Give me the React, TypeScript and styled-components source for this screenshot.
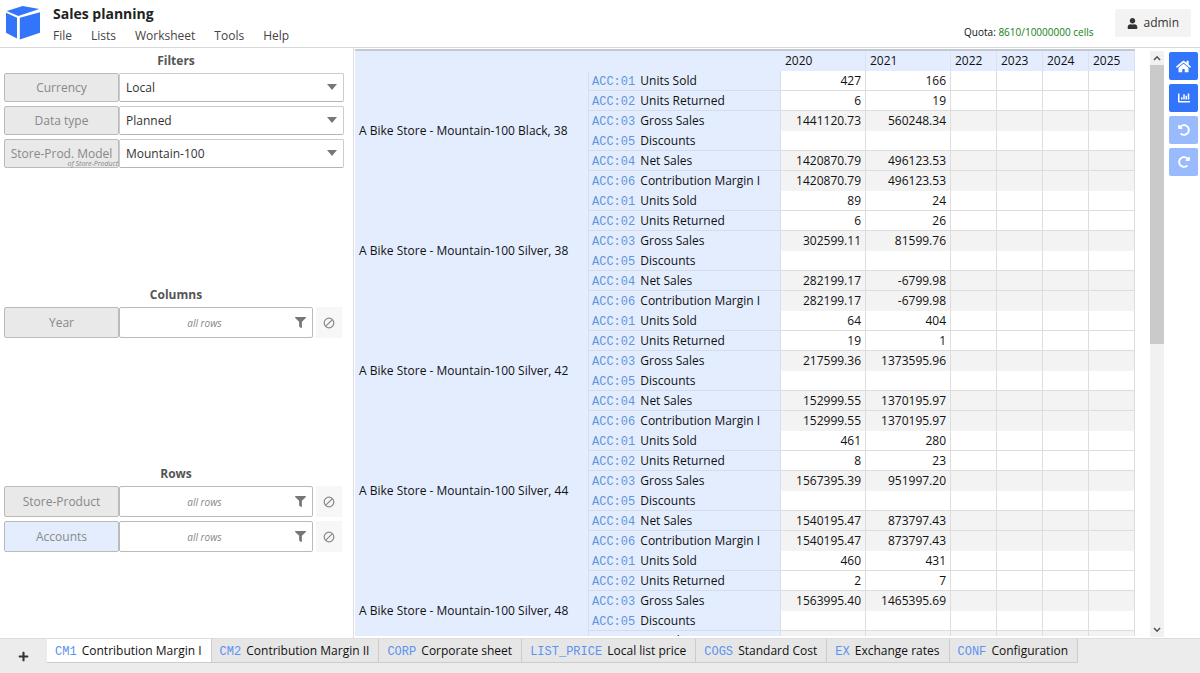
import React from "react";
import styled, { createGlobalStyle, css } from "styled-components";
import { FaHome, FaChartBar, FaUndoAlt, FaRedoAlt, FaFilter, FaUser, FaPlus } from "react-icons/fa";

const Global = createGlobalStyle`
  *, *::before, *::after { box-sizing: border-box; }
  body { margin: 0; background: #fff; }
  button, select, input { font: inherit; color: inherit; }
`;

const Page = styled.div`
  display: flex;
  flex-direction: column;
  height: 100vh;
  overflow: hidden;
  font: 12px/20px "Open Sans", sans-serif;
  color: #222;
`;

const Header = styled.header`
  display: flex;
  flex: none;
  height: 48px;
  padding: 0 9px 0 5px;
  border-bottom: 1px solid #d8d8d8;
`;

const Logo = styled.svg`
  flex: none;
  width: 36px;
  height: 36px;
  margin-top: 5px;
`;

const Heading = styled.div`
  flex: 1;
  margin-left: 12px;
  padding-top: 4px;
`;

const Title = styled.h1`
  margin: 0;
  font-size: 14px;
  line-height: 20px;
`;

const Menu = styled.nav`
  display: flex;
  gap: 19px;
  line-height: 24px;
`;

const MenuLink = styled.a`
  color: #444;
  text-decoration: none;
`;

const Quota = styled.p`
  margin: 22px 22px 0 0;
  font-size: 10px;
  color: #111;

  span { color: #108010; }
`;

const UserButton = styled.button`
  display: flex;
  align-items: center;
  gap: 5px;
  height: 28px;
  margin-top: 9px;
  padding: 0 12px;
  border: 0;
  border-radius: 2px;
  background: #f3f3f3;
  color: #333;
`;

const Main = styled.main`
  display: flex;
  flex: 1;
  min-height: 0;
`;

const Sidebar = styled.aside`
  display: flex;
  flex-direction: column;
  flex: none;
  width: 354px;
  padding: 0 9px 0 4px;
  border-right: 1px solid #ddd;
`;

const Section = styled.section<{ $height: number }>`
  display: flex;
  flex-direction: column;
  gap: 4px;
  min-height: ${(p) => p.$height}px;
`;

const SectionTitle = styled.h2`
  margin: 0;
  padding: 5px 0 0 4px;
  font-size: 12px;
  line-height: 16px;
  text-align: center;
  color: #555;
`;

const Field = styled.div<{ $tall?: boolean }>`
  display: flex;
  height: ${(p) => (p.$tall ? 31 : 29)}px;
`;

const labelBox = css<{ $active?: boolean }>`
  position: relative;
  flex: none;
  width: 115px;
  padding: 0;
  border: 1px solid #bbb;
  border-radius: 2px;
  background: ${(p) => (p.$active ? "#e4edfe" : "#e9e9e9")};
  color: #888;
  line-height: 27px;
  text-align: center;
  white-space: nowrap;
`;

const FieldLabel = styled.label`${labelBox}`;
const FieldButton = styled.button<{ $active?: boolean }>`${labelBox}`;

const SubLabel = styled.small`
  position: absolute;
  right: 0;
  bottom: 0;
  font-size: 7px;
  font-style: italic;
  line-height: 7px;
`;

const SelectBox = styled.div`
  position: relative;
  flex: 1;

  &::after {
    content: "";
    position: absolute;
    top: 11px;
    right: 7px;
    border: 5px solid transparent;
    border-top: 6px solid #777;
    border-bottom: 0;
    pointer-events: none;
  }
`;

const Select = styled.select`
  width: 100%;
  height: 100%;
  padding: 0 24px 0 6px;
  border: 1px solid #ccc;
  border-bottom-color: #b5b5b5;
  border-radius: 2px;
  appearance: none;
  background: #fff;
  color: #333;
`;

const RowsButton = styled.button`
  display: flex;
  flex: 1;
  align-items: center;
  padding: 0 6px 0 0;
  border: 1px solid #bbb;
  border-radius: 2px;
  background: #fff;
  color: #888;

  em { flex: 1; padding-right: 6px; font-size: 10px; line-height: 18px; }
  svg { color: #777; }
`;

const ClearButton = styled.button`
  display: grid;
  place-items: center;
  width: 26px;
  margin: 0 2px 0 3px;
  padding: 0;
  border: 0;
  background: #f7f7f7;
  color: #888;
`;

const Sheet = styled.div`
  flex: 1;
  min-width: 0;
  margin: 1px 0 2px 1px;
  overflow: hidden;
`;

const Table = styled.table`
  width: 780px;
  border-top: 2px solid #c4c8d0;
  border-collapse: separate;
  border-spacing: 0;
  table-layout: fixed;
  color: #111;
`;

const GroupCell = styled.th`
  padding: 0 4px;
  border-right: 1px solid #d5dff0;
  background: #e4edfe;
  font-weight: 400;
  text-align: left;
  white-space: nowrap;
`;

const YearCell = styled.th`
  height: 20px;
  padding: 0 4px;
  border-right: 1px solid #d9e2f3;
  background: #e4edfe;
  font-weight: 400;
  line-height: 20px;
  text-align: left;
`;

const CornerCell = styled(YearCell)`
  border-right-color: #e4edfe;
`;

const AccountCell = styled.th<{ $line: boolean }>`
  height: 20px;
  padding: 0 4px 0 3px;
  border-right: 1px solid #d5dff0;
  border-bottom: 1px solid ${(p) => (p.$line ? "#d5ddeb" : "#e4edfe")};
  background: #e4edfe;
  font-weight: 400;
  line-height: 19px;
  text-align: left;
  white-space: nowrap;
`;

const NumberCell = styled.td<{ $shaded: boolean; $line: boolean }>`
  height: 20px;
  padding: 0 4px;
  border-right: 1px solid #ddd;
  border-bottom: 1px solid ${(p) => (p.$line ? "#ddd" : "transparent")};
  background: ${(p) => (p.$shaded ? "#f3f3f3" : "#fff")};
  line-height: 19px;
  text-align: right;
`;

const Code = styled.code<{ $tab?: boolean }>`
  margin-right: 2px;
  font: 12px "Liberation Mono", monospace;
  color: ${(p) => (p.$tab ? "#5c92f2" : "#5f96dd")};
`;

const Scrollbar = styled.div`
  display: flex;
  flex-direction: column;
  flex: none;
  width: 14px;
  margin: 3px 4px 1px 0;
  background: #f1f1f1;
`;

const ScrollButton = styled.button`
  display: grid;
  place-items: center;
  height: 14px;
  padding: 0;
  border: 0;
  background: none;
  color: #555;
`;

const Track = styled.div`
  flex: 1;
`;

const Thumb = styled.div`
  height: 50%;
  background: #cacaca;
`;

const Tools = styled.div`
  display: flex;
  flex-direction: column;
  flex: none;
  gap: 4px;
  width: 32px;
  padding: 4px 2px 0 1px;
`;

const ToolButton = styled.button`
  display: grid;
  place-items: center;
  height: 28px;
  padding: 0;
  border: 0;
  border-radius: 2px;
  background: #3375fa;
  color: #fff;

  &:disabled { background: #99bafc; color: #fff; }
`;

const Footer = styled.footer`
  display: flex;
  align-items: flex-start;
  flex: none;
  height: 35px;
  border-top: 1px solid #ddd;
  background: #ececec;
`;

const AddButton = styled.button`
  display: grid;
  place-items: center;
  width: 47px;
  height: 34px;
  padding: 0;
  border: 0;
  background: none;
  color: #333;
`;

const Tab = styled.button<{ $active: boolean }>`
  height: 24px;
  padding: 0 9px 0 8px;
  border: 1px solid #ccc;
  border-width: 0 1px 1px 0;
  background: ${(p) => (p.$active ? "#fff" : "#e6e6e6")};
  color: #111;
  line-height: 23px;
  white-space: nowrap;
`;

const years = ["2020", "2021", "2022", "2023", "2024", "2025"];

const accounts = [
  { code: "ACC:01", name: "Units Sold", shaded: false, line: true },
  { code: "ACC:02", name: "Units Returned", shaded: false, line: true },
  { code: "ACC:03", name: "Gross Sales", shaded: true, line: false },
  { code: "ACC:05", name: "Discounts", shaded: false, line: true },
  { code: "ACC:04", name: "Net Sales", shaded: true, line: true },
  { code: "ACC:06", name: "Contribution Margin I", shaded: true, line: false },
];

const products = [
  { name: "Mountain-100 Black, 38", values: [["427", "166"], ["6", "19"], ["1441120.73", "560248.34"], [], ["1420870.79", "496123.53"], ["1420870.79", "496123.53"]] },
  { name: "Mountain-100 Silver, 38", values: [["89", "24"], ["6", "26"], ["302599.11", "81599.76"], [], ["282199.17", "-6799.98"], ["282199.17", "-6799.98"]] },
  { name: "Mountain-100 Silver, 42", values: [["64", "404"], ["19", "1"], ["217599.36", "1373595.96"], [], ["152999.55", "1370195.97"], ["152999.55", "1370195.97"]] },
  { name: "Mountain-100 Silver, 44", values: [["461", "280"], ["8", "23"], ["1567395.39", "951997.20"], [], ["1540195.47", "873797.43"], ["1540195.47", "873797.43"]] },
  { name: "Mountain-100 Silver, 48", values: [["460", "431"], ["2", "7"], ["1563995.40", "1465395.69"], [], [], []] },
];

const filters = [
  { id: "currency", label: "Currency", value: "Local" },
  { id: "data-type", label: "Data type", value: "Planned" },
  { id: "model", label: "Store-Prod. Model", value: "Mountain-100", sub: "of Store-Product" },
];

const tabs = [
  ["CM1", "Contribution Margin I"],
  ["CM2", "Contribution Margin II"],
  ["CORP", "Corporate sheet"],
  ["LIST_PRICE", "Local list price"],
  ["COGS", "Standard Cost"],
  ["EX", "Exchange rates"],
  ["CONF", "Configuration"],
];

function Dimension({ name, active }: { name: string; active?: boolean }) {
  return (
    <Field $tall>
      <FieldButton $active={active}>{name}</FieldButton>
      <RowsButton aria-label={`Filter ${name}`}>
        <em>all rows</em>
        <FaFilter size={11} />
      </RowsButton>
      <ClearButton aria-label={`Clear ${name} filter`}>
        <svg width="12" height="12" viewBox="0 0 12 12" fill="none" stroke="currentColor" strokeWidth="1.2">
          <circle cx="6" cy="6" r="4.8" />
          <path d="M2.8 9.2 9.2 2.8" />
        </svg>
      </ClearButton>
    </Field>
  );
}

function Chevron({ down }: { down?: boolean }) {
  return (
    <svg width="8" height="6" viewBox="0 0 8 6" fill="none" stroke="currentColor" strokeWidth="1.6">
      <path d={down ? "M1 1 4 4.2 7 1" : "M1 5 4 1.8 7 5"} />
    </svg>
  );
}

export default function App() {
  return (
    <Page>
      <Global />
      <Header>
        <Logo viewBox="0 0 36 36" fill="#3375fa">
          <path d="M1.7 6 17.7 1 34.3 4 13.3 11Z" />
          <path d="M1 7.7 12 12.7V33.5L1 27.7Z" />
          <path d="M14.8 12.7 35 7.3V27.7L14.8 34.5Z" />
        </Logo>
        <Heading>
          <Title>Sales planning</Title>
          <Menu>
            {["File", "Lists", "Worksheet", "Tools", "Help"].map((m) => (
              <MenuLink href="#" key={m}>{m}</MenuLink>
            ))}
          </Menu>
        </Heading>
        <Quota>Quota: <span>8610/10000000 cells</span></Quota>
        <UserButton><FaUser size={11} />admin</UserButton>
      </Header>
      <Main>
        <Sidebar>
          <Section $height={234}>
            <SectionTitle>Filters</SectionTitle>
            {filters.map((f) => (
              <Field key={f.id}>
                <FieldLabel htmlFor={f.id}>
                  {f.label}
                  {f.sub && <SubLabel>{f.sub}</SubLabel>}
                </FieldLabel>
                <SelectBox>
                  <Select id={f.id}><option>{f.value}</option></Select>
                </SelectBox>
              </Field>
            ))}
          </Section>
          <Section $height={179}>
            <SectionTitle>Columns</SectionTitle>
            <Dimension name="Year" />
          </Section>
          <Section $height={100}>
            <SectionTitle>Rows</SectionTitle>
            <Dimension name="Store-Product" />
            <Dimension name="Accounts" active />
          </Section>
        </Sidebar>
        <Sheet>
          <Table>
            <colgroup>
              <col width="234" />
              <col width="192" />
              <col width="85" />
              <col width="85" />
              <col width="46" />
              <col width="46" />
              <col width="46" />
              <col width="46" />
            </colgroup>
            <thead>
              <tr>
                <CornerCell colSpan={2} />
                {years.map((y) => <YearCell key={y}>{y}</YearCell>)}
              </tr>
            </thead>
            <tbody>
              {products.map((p) =>
                accounts.map((a, i) => (
                  <tr key={p.name + a.code}>
                    {i === 0 && <GroupCell rowSpan={6}>A Bike Store - {p.name}</GroupCell>}
                    <AccountCell $line={a.line}><Code>{a.code}</Code> {a.name}</AccountCell>
                    {years.map((y, c) => (
                      <NumberCell key={y} $shaded={a.shaded} $line={a.line}>{p.values[i][c]}</NumberCell>
                    ))}
                  </tr>
                ))
              )}
            </tbody>
          </Table>
        </Sheet>
        <Scrollbar>
          <ScrollButton aria-label="Scroll up"><Chevron /></ScrollButton>
          <Track><Thumb /></Track>
          <ScrollButton aria-label="Scroll down"><Chevron down /></ScrollButton>
        </Scrollbar>
        <Tools>
          <ToolButton aria-label="Home"><FaHome size={15} /></ToolButton>
          <ToolButton aria-label="Chart"><FaChartBar size={12} /></ToolButton>
          <ToolButton aria-label="Undo" disabled><FaUndoAlt size={12} /></ToolButton>
          <ToolButton aria-label="Redo" disabled><FaRedoAlt size={12} /></ToolButton>
        </Tools>
      </Main>
      <Footer>
        <AddButton aria-label="Add sheet"><FaPlus size={11} /></AddButton>
        {tabs.map(([code, name], i) => (
          <Tab key={code} $active={i === 0}><Code $tab>{code}</Code> {name}</Tab>
        ))}
      </Footer>
    </Page>
  );
}
